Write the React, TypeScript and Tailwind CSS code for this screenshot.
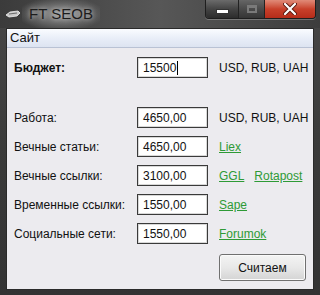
import { Fragment } from 'react';

type Row = {
  label: string;
  value: string;
  links?: string[];
  note?: string;
};

const ROWS: Row[] = [
  { label: 'Работа:', value: '4650,00', note: 'USD, RUB, UAH' },
  { label: 'Вечные статьи:', value: '4650,00', links: ['Liex'] },
  { label: 'Вечные ссылки:', value: '3100,00', links: ['GGL', 'Rotapost'] },
  { label: 'Временные ссылки:', value: '1550,00', links: ['Sape'] },
  { label: 'Социальные сети:', value: '1550,00', links: ['Forumok'] },
];

function AppIcon() {
  return (
    <svg width="16" height="10" viewBox="0 0 16 10">
      <path d="M1 6 L5 3 L13 2 L15 4 L12 7 L4 8 Z" fill="#c9c9c9" stroke="#f2f2f2" strokeWidth="0.8" />
      <path d="M4 5 L12 4" stroke="#6b6b6b" strokeWidth="1" />
    </svg>
  );
}

function CaptionButtons() {
  return (
    <div className="flex h-[19px] rounded-b-[4px] border border-t-0 border-[#1e1e1e] overflow-hidden shadow-[0_1px_0_rgba(255,255,255,0.25)]">
      <div className="w-[33px] flex items-center justify-center bg-gradient-to-b from-[#6b6b6b] via-[#444] to-[#2c2c2c] border-r border-[#222]">
        <div className="w-[11px] h-[3px] bg-white mt-[5px] border border-[#333] box-content" />
      </div>
      <div className="w-[26px] flex items-center justify-center bg-gradient-to-b from-[#666] via-[#4a4a4a] to-[#353535] border-r border-[#222]">
        <div className="w-[10px] h-[8px] border-2 border-[#7a7a7a] border-t-[3px]" />
      </div>
      <div className="w-[50px] flex items-center justify-center bg-gradient-to-b from-[#e08a78] via-[#c8402a] to-[#b52c1a]">
        <svg width="14" height="12" viewBox="0 0 14 12">
          <path d="M2 1 L12 11 M12 1 L2 11" stroke="#5a1a10" strokeWidth="4" strokeLinecap="round" />
          <path d="M2 1 L12 11 M12 1 L2 11" stroke="#ffffff" strokeWidth="2.2" strokeLinecap="round" />
        </svg>
      </div>
    </div>
  );
}

function Field({ value, caret }: { value: string; caret?: boolean }) {
  return (
    <div className="w-[71px] h-[21px] bg-white border border-[#3a3a3a] shadow-[inset_0_0_0_1px_#d8d8d8] flex items-center pl-[5px] text-[12px] text-[#111]">
      {value}
      {caret && <span className="w-px h-[14px] bg-black ml-px" />}
    </div>
  );
}

export default function App() {
  return (
    <div
      className="w-[320px] h-[295px] flex flex-col bg-gradient-to-b from-[#474747] via-[#3a3a3a] to-[#333] overflow-hidden"
      style={{ fontFamily: '"Liberation Sans", Arial, sans-serif' }}
    >
      <div className="h-[28px] flex justify-between items-start pr-[4px] bg-gradient-to-r from-[#3b3b3b] via-[#575757] to-[#3d3d3d]">
        <div className="flex items-center h-[28px] pl-[5px] gap-[1px]">
          <AppIcon />
          <span className="text-[15px] text-[#1c1c1c] px-[7px] py-[4px] bg-[radial-gradient(ellipse_at_center,rgba(165,165,165,0.85)_0%,rgba(120,120,120,0.5)_55%,transparent_80%)] [text-shadow:0_0_5px_rgba(220,220,220,0.9)]">
            FT SEOB
          </span>
        </div>
        <CaptionButtons />
      </div>

      <div className="flex-1 px-[6px] pb-[5px] flex">
        <div className="flex-1 flex flex-col border border-[#2a2a2a] bg-[#ecebef]">
          <div className="h-[19px] flex items-center pl-[3px] bg-gradient-to-b from-[#fafcff] via-[#e9eef8] to-[#dde4f1] border-b border-[#b9c2d4] text-[13px] text-[#111]">
            Сайт
          </div>

          <div className="flex flex-col pl-[7px] pt-[9px] text-[12px] text-[#111]">
            <div className="flex items-center h-[21px]">
              <span className="w-[123px] font-bold">Бюджет:</span>
              <Field value="15500" caret />
              <span className="ml-[11px]">USD, RUB, UAH</span>
            </div>

            <div className="flex flex-col gap-[8px] mt-[29px]">
              {ROWS.map((row) => (
                <div key={row.label} className="flex items-center h-[21px]">
                  <span className="w-[123px]">{row.label}</span>
                  <Field value={row.value} />
                  <div className="ml-[11px] flex gap-[10px]">
                    {row.note && <span>{row.note}</span>}
                    {row.links?.map((link) => (
                      <Fragment key={link}>
                        <span className="text-[#2e9a36] underline">{link}</span>
                      </Fragment>
                    ))}
                  </div>
                </div>
              ))}
            </div>

            <div className="flex pl-[205px] mt-[10px]">
              <button
                type="button"
                className="w-[87px] h-[27px] rounded-[3px] border border-[#707070] bg-gradient-to-b from-[#f4f4f4] via-[#e8e8e8] to-[#d4d4d4] shadow-[inset_0_0_0_1px_#fbfbfb] text-[12px] text-[#111]"
              >
                Считаем
              </button>
            </div>
          </div>
        </div>
      </div>
    </div>
  );
}
